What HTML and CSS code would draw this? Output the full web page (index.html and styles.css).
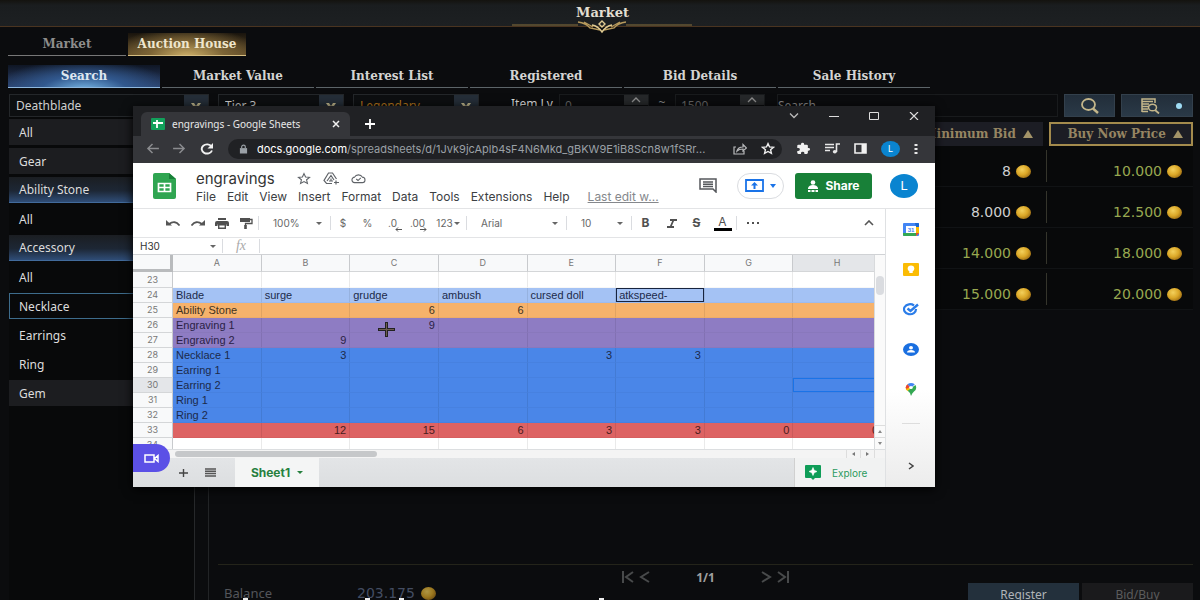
FILE: index.html
```html
<!DOCTYPE html>
<html lang="en">
<head>
<meta charset="utf-8">
<title>Market</title>
<link rel="stylesheet" href="styles.css">
</head>
<body>
<main class="game">
  <header class="game-title">
    <h1>Market</h1>
    <svg class="ornament" viewBox="0 0 180 14" width="180" height="14" fill="none" stroke="#b79a5c">
      <path d="M0 5h66M114 5h66" stroke="#8a713c"/>
      <path d="M66 2q8 1 12 6l10 2M114 2q-8 1-12 6l-10 2M72 2l9 5M108 2l-9 5" stroke-width="1.3"/>
      <path d="M90 1l3 3-3 3-3-3zM80 5q6 1 10 7 4-6 10-7" stroke="#e0cb92" stroke-width="1.4"/>
    </svg>
  </header>

  <nav class="tabs-main">
    <button class="mtab">Market</button>
    <button class="mtab on">Auction House</button>
  </nav>
  <nav class="tabs-sub">
    <button class="stab on">Search</button>
    <button class="stab">Market Value</button>
    <button class="stab">Interest List</button>
    <button class="stab">Registered</button>
    <button class="stab">Bid Details</button>
    <button class="stab">Sale History</button>
  </nav>

  <form class="filters">
    <div class="pick wide"><select aria-label="Class"><option>Deathblade</option></select><span class="drop"><svg viewBox="0 0 12 8" width="12" height="8"><path d="M1 1h3l2 3 2-3h3L7 7H5z" fill="#c3b98e"/></svg></span></div>
    <div class="pick"><select aria-label="Tier"><option>Tier 3</option></select><span class="drop"><svg viewBox="0 0 12 8" width="12" height="8"><path d="M1 1h3l2 3 2-3h3L7 7H5z" fill="#c3b98e"/></svg></span></div>
    <div class="pick gold"><select aria-label="Grade"><option>Legendary</option></select><span class="drop"><svg viewBox="0 0 12 8" width="12" height="8"><path d="M1 1h3l2 3 2-3h3L7 7H5z" fill="#c3b98e"/></svg></span></div>
    <label class="lv" for="lvmin">Item Lv.</label>
    <div class="step"><input id="lvmin" type="text" value="0"><span class="up"><svg viewBox="0 0 10 6" width="10" height="6"><path d="M1 5l4-4 4 4" fill="none" stroke="#8d8d8d" stroke-width="1.3"/></svg></span></div>
    <span class="tilde">~</span>
    <div class="step"><input type="text" aria-label="Maximum item level" value="1500"><span class="up"><svg viewBox="0 0 10 6" width="10" height="6"><path d="M1 5l4-4 4 4" fill="none" stroke="#8d8d8d" stroke-width="1.3"/></svg></span></div>
    <input class="query" type="text" aria-label="Search items" placeholder="Search">
    <button type="button" class="tool" aria-label="Search"><svg viewBox="0 0 20 16" width="20" height="16" fill="none" stroke="#c4b68a"><ellipse cx="8.500" cy="6.500" rx="6.500" ry="5.500" stroke-width="1.800"/><path d="M13 10.500l5 4.500" stroke-width="2.400"/></svg></button>
    <button type="button" class="tool more" aria-label="Detailed search"><svg viewBox="0 0 20 16" width="20" height="16" fill="none" stroke="#c4b68a"><path d="M2 14V1h13v4M2 3.500h11M2 6h7M2 8.500h6M2 11h6M2 13.500h6" stroke-width="1.500"/><ellipse cx="12.500" cy="9.500" rx="4" ry="3.300" stroke-width="1.500"/><path d="M15 12l4 3.500" stroke-width="1.800"/></svg><i></i></button>
  </form>

  <div class="content">
    <aside class="cats">
      <button class="cat solid">All</button>
      <button class="cat solid">Gear</button>
      <button class="cat open">Ability Stone</button>
      <button class="cat">All</button>
      <button class="cat open">Accessory</button>
      <button class="cat">All</button>
      <button class="cat sel">Necklace</button>
      <button class="cat">Earrings</button>
      <button class="cat">Ring</button>
      <button class="cat solid">Gem</button>
    </aside>
    <section class="results">
      <table class="bids">
        <thead><tr><th>Minimum Bid <i></i></th><th class="sorted">Buy Now Price <i></i></th></tr></thead>
        <tbody>
          <tr><td class="w">8<b class="coin"></b></td><td>10.000<b class="coin"></b></td></tr>
          <tr><td class="w">8.000<b class="coin"></b></td><td>12.500<b class="coin"></b></td></tr>
          <tr><td>14.000<b class="coin"></b></td><td>18.000<b class="coin"></b></td></tr>
          <tr><td>15.000<b class="coin"></b></td><td>20.000<b class="coin"></b></td></tr>
        </tbody>
      </table>
      <footer class="foot">
        <div class="pager">
          <button aria-label="Previous pages"><svg viewBox="0 0 28 12" width="28" height="12" fill="none" stroke="#484a4b" stroke-width="2"><path d="M1 0v12M11 1L4 6l7 5M27 1l-8 5 8 5"/></svg></button>
          <span>1/1</span>
          <button aria-label="Next pages"><svg viewBox="0 0 28 12" width="28" height="12" fill="none" stroke="#484a4b" stroke-width="2"><path d="M27 0v12M17 1l7 5-7 5M1 1l8 5-8 5"/></svg></button>
        </div>
        <div class="wallet">
          <span class="bal">Balance</span><span class="amt">203.175</span><b class="coin dim"></b>
          <button class="act reg">Register</button><button class="act">Bid/Buy</button>
        </div>
      </footer>
    </section>
  </div>
  <div class="caption"><i class="m1"></i><i class="m2"></i><i class="m3"></i><i class="m4"></i></div>
</main>

<section class="browser">
  <div class="strip">
    <div class="tab">
      <svg viewBox="0 0 14 12" width="14" height="12"><rect width="14" height="12" rx="1" fill="#12a05b"/><path d="M2 5h10M6 2v8" stroke="#fff" stroke-width="1.800"/></svg>
      <span>engravings - Google Sheets</span>
      <button aria-label="Close tab"><svg viewBox="0 0 8 8" width="8" height="8"><path d="M1 1l6 6M7 1L1 7" stroke="#f1f1f1" stroke-width="1.500"/></svg></button>
    </div>
    <button class="newtab" aria-label="New tab"><svg viewBox="0 0 10 10" width="10" height="10"><path d="M5 0v10M0 5h10" stroke="#fff" stroke-width="1.800"/></svg></button>
    <div class="winbtns">
      <button aria-label="Tab search"><svg viewBox="0 0 10 8" width="10" height="8" fill="none" stroke="#bbb" stroke-width="1.300"><path d="M1 1.500l4 4 4-4"/></svg></button>
      <button aria-label="Minimise"><svg viewBox="0 0 10 8" width="10" height="8" stroke="#ddd"><path d="M0 4.500h10"/></svg></button>
      <button aria-label="Maximise"><svg viewBox="0 0 10 8" width="10" height="8" fill="none" stroke="#ddd"><path d="M.5.500h9v7h-9z"/></svg></button>
      <button aria-label="Close"><svg viewBox="0 0 10 8" width="10" height="8" fill="none" stroke="#ddd" stroke-width="1.200"><path d="M1 0l8 8M9 0L1 8"/></svg></button>
    </div>
  </div>
  <div class="omni">
    <button aria-label="Back"><svg viewBox="0 0 14 12" width="13" height="11" fill="none" stroke="#8b8c8f" stroke-width="1.600"><path d="M14 6H2M7 1L2 6l5 5"/></svg></button>
    <button aria-label="Forward"><svg viewBox="0 0 14 12" width="13" height="11" fill="none" stroke="#8b8c8f" stroke-width="1.600"><path d="M0 6h12M7 1l5 5-5 5"/></svg></button>
    <button aria-label="Reload"><svg viewBox="0 0 14 12" width="14" height="12" fill="none" stroke="#f1f1f1" stroke-width="1.900"><path d="M11.500 3.500A5.300 4.600 0 1 0 12 7.500"/><path d="M13 0v5.500H7.500z" fill="#f1f1f1" stroke="none"/></svg></button>
    <div class="url">
      <svg viewBox="0 0 10 10" width="9" height="10"><rect x="1" y="4" width="8" height="6" fill="#9aa0a6"/><path d="M3 4V2.500a2 1.800 0 0 1 4 0V4" fill="none" stroke="#9aa0a6" stroke-width="1.300"/></svg>
      <span class="addr"><b>docs.google.com</b>/spreadsheets/d/1Jvk9jcAplb4sF4N6Mkd_gBKW9E1iB8Scn8w1fSRr...</span>
      <svg viewBox="0 0 14 12" width="14" height="12" fill="none" stroke="#b8b9bb" stroke-width="1.200"><path d="M3 4H1v7h10V8M4 8q1-4 6-4V1.500L13.500 5 10 8V6Q6 6 4 8z"/></svg>
      <svg viewBox="0 0 24 24" width="14" height="13" preserveAspectRatio="none" fill="none" stroke="#eee" stroke-width="2.400"><path d="M12 3l2.700 6.200 6.800.6-5.100 4.500 1.500 6.700L12 17.500 6.100 21l1.500-6.700-5.100-4.500 6.800-.6z"/></svg>
    </div>
    <button aria-label="Extensions"><svg viewBox="0 0 24 24" width="15" height="13" preserveAspectRatio="none" fill="#f1f1f1"><path d="M20 11h-1V7a2 2 0 0 0-2-2h-4V4a2.500 2.500 0 0 0-5 0v1H4a2 2 0 0 0-2 2v4h1.500a2.700 2.700 0 0 1 0 5.400H2V20a2 2 0 0 0 2 2h4v-1.500a2.700 2.700 0 0 1 5.400 0V22H17a2 2 0 0 0 2-2v-4h1a2.500 2.500 0 0 0 0-5z"/></svg></button>
    <button aria-label="Media"><svg viewBox="0 0 15 11" width="15" height="11" fill="none" stroke="#e8e8e8" stroke-width="1.600"><path d="M0 1.500h9M0 4.500h9M0 7.500h5M11.500 9V1H15"/><ellipse cx="9.800" cy="8.800" rx="2" ry="1.700" fill="#e8e8e8" stroke="none"/></svg></button>
    <button aria-label="Side panel"><svg viewBox="0 0 13 11" width="13" height="11"><path d="M1 1h11v9H1z" fill="none" stroke="#f1f1f1" stroke-width="1.600"/><path d="M7.500 1H12v9H7.500z" fill="#f1f1f1"/></svg></button>
    <button class="me" aria-label="Profile">L</button>
    <button aria-label="Menu"><svg viewBox="0 0 4 12" width="4" height="12" fill="#e8e8e8"><path d="M.5 1h3v2h-3zM.5 5h3v2h-3zM.5 9h3v2h-3z"/></svg></button>
  </div>

  <div class="doc-head">
    <svg class="logo" viewBox="0 0 23 26" width="23" height="26"><path d="M2 0h14l7 6v18a2 2 0 0 1-2 2H2a2 2 0 0 1-2-2V2a2 2 0 0 1 2-2z" fill="#2fa551"/><path d="M16 0l7 6h-7z" fill="#188038"/><path d="M5.500 10.500h12v8h-12zM5.500 14.500h12M11.500 10.500v8" fill="none" stroke="#fff" stroke-width="1.700"/></svg>
    <div class="doc-id">
      <div class="doc-name"><h2>engravings</h2>
        <svg viewBox="0 0 24 24" width="14" height="13" preserveAspectRatio="none" fill="none" stroke="#5f6368" stroke-width="1.900"><path d="M12 3l2.700 6.200 6.800.6-5.100 4.500 1.500 6.700L12 17.500 6.100 21l1.500-6.700-5.100-4.500 6.800-.6z"/></svg>
        <svg viewBox="0 0 16 13" width="16" height="13" fill="none" stroke="#5f6368"><path d="M9 11.500H3.500L1 8.500 5.500 1h4l4 6M4 9l4-5.500L11 8M6 9h4M8 6.500v2M13 8.500v4M11 10.500h5" stroke-width="1.200"/></svg>
        <svg viewBox="0 0 16 12" width="15" height="11" fill="none" stroke="#5f6368" stroke-width="1.200"><path d="M4 10.500a3 3 0 0 1-.3-6 4.600 4 0 0 1 8.500 0A3 3 0 0 1 12 10.500zM5.500 6.500l2 1.700 3-3"/></svg>
      </div>
      <nav class="menus"><button>File</button><button>Edit</button><button>View</button><button>Insert</button><button>Format</button><button>Data</button><button>Tools</button><button>Extensions</button><button>Help</button><a href="#">Last edit w...</a></nav>
    </div>
    <button class="plain" aria-label="Comments"><svg viewBox="0 0 18 15" width="18" height="15" fill="none" stroke="#55585c" stroke-width="1.500"><path d="M1 1h16v13l-3-3H1zM4 4h10M4 6.200h10M4 8.400h10"/></svg></button>
    <button class="present" aria-label="Present"><svg viewBox="0 0 19 13" width="19" height="13"><path d="M1 1h17v11H1z" fill="none" stroke="#1a73e8" stroke-width="1.800"/><path d="M9.500 3L13 6.500h-2.500V10h-2V6.500H6z" fill="#1a73e8"/></svg><svg viewBox="0 0 6 4" width="6" height="4"><path d="M0 0h6L3 4z" fill="#1a73e8"/></svg></button>
    <button class="share"><svg viewBox="0 0 12 12" width="12" height="12" fill="#fff"><ellipse cx="6" cy="2.500" rx="2.300" ry="2.300"/><path d="M1 8q1-3 5-3t5 3v1H1zM1 10h2.500v2H1zM4.500 10h3v2h-3zM8.500 10H11v2H8.500z"/></svg>Share</button>
    <button class="avatar" aria-label="Account">L</button>
  </div>

  <div class="doc-body">
    <div class="sheet">
      <div class="tools">
        <button aria-label="Undo"><svg viewBox="0 0 14 6" width="14" height="6" fill="none" stroke="#555" stroke-width="1.700"><path d="M3 4q6-4.500 10.500 1.500"/><path d="M0 0v5.500h6z" fill="#555" stroke="none"/></svg></button>
        <button aria-label="Redo"><svg viewBox="0 0 14 6" width="14" height="6" fill="none" stroke="#555" stroke-width="1.700"><path d="M11 4Q5-.500.500 5.500"/><path d="M14 0v5.500H8z" fill="#555" stroke="none"/></svg></button>
        <button aria-label="Print"><svg viewBox="0 0 14 11" width="14" height="11" fill="#505050"><path d="M3 0h8v2H3zM2 3h10a2 2 0 0 1 2 2v3h-2.500V6.500h-9V8H0V5a2 2 0 0 1 2-2z"/><path d="M3.700 6.700h6.600v3.600H3.700z" fill="none" stroke="#505050" stroke-width="1.400"/></svg></button>
        <button aria-label="Paint format"><svg viewBox="0 0 13 11" width="13" height="11" fill="#505050"><path d="M0 0h10v4H0z"/><path d="M10 1.500h2v4H5.500V8" fill="none" stroke="#505050" stroke-width="1.300"/><path d="M4.200 7h2.600v4H4.200z"/></svg></button>
        <button class="dd bar">100%<i></i></button>
        <button class="bar">$</button>
        <button>%</button>
        <button class="dec" aria-label="Decrease decimals">.0<svg viewBox="0 0 7 5" width="7" height="5"><path d="M7 2.500H1M3 .5l-2 2 2 2" fill="none" stroke="#555"/></svg></button>
        <button class="dec" aria-label="Increase decimals">.00<svg viewBox="0 0 7 5" width="7" height="5"><path d="M0 2.500h6M4 .5l2 2-2 2" fill="none" stroke="#555"/></svg></button>
        <button class="num">123<i></i></button>
        <button class="dd bar">Arial<i></i></button>
        <button class="dd bar">10<i></i></button>
        <button class="bar fmt">B</button>
        <button class="fmt it" aria-label="Italic"><svg viewBox="0 0 10 9" width="10" height="9" fill="none" stroke="#505050" stroke-width="1.800"><path d="M3 1h7M0 8h7M6.500 1l-3 7"/></svg></button>
        <button class="fmt st">S</button>
        <button class="fmt ink"><span>A</span></button>
        <button class="bar dots" aria-label="More"><svg viewBox="0 0 12 2" width="12" height="2" fill="#505050"><path d="M0 0h2v2H0zM5 0h2v2H5zM10 0h2v2h-2z"/></svg></button>
        <button class="hide" aria-label="Hide menus"><svg viewBox="0 0 10 6" width="10" height="6"><path d="M1 5l4-4 4 4" fill="none" stroke="#555" stroke-width="1.600"/></svg></button>
      </div>
      <div class="formula"><button class="cellref">H30<i></i></button><label for="fx">fx</label><input id="fx" type="text"></div>
      <div class="grid-wrap">
        <div class="grid">
          <table class="cells">
            <colgroup><col class="rowno"><col span="8"></colgroup>
            <thead><tr><th class="corner"></th><th>A</th><th>B</th><th>C</th><th>D</th><th>E</th><th>F</th><th>G</th><th class="cur">H</th></tr></thead>
            <tbody>
              <tr class="first"><th>23</th><td></td><td></td><td></td><td></td><td></td><td></td><td></td><td></td></tr>
              <tr class="sky"><th>24</th><td>Blade</td><td>surge</td><td>grudge</td><td>ambush</td><td>cursed doll</td><td class="boxed">atkspeed-</td><td></td><td></td></tr>
              <tr class="amber"><th>25</th><td>Ability Stone</td><td></td><td class="n">6</td><td class="n">6</td><td></td><td></td><td></td><td></td></tr>
              <tr class="violet"><th>26</th><td>Engraving 1</td><td></td><td class="n">9</td><td></td><td></td><td></td><td></td><td></td></tr>
              <tr class="violet"><th>27</th><td>Engraving 2</td><td class="n">9</td><td></td><td></td><td></td><td></td><td></td><td></td></tr>
              <tr class="blue"><th>28</th><td>Necklace 1</td><td class="n">3</td><td></td><td></td><td class="n">3</td><td class="n">3</td><td></td><td></td></tr>
              <tr class="blue"><th>29</th><td>Earring 1</td><td></td><td></td><td></td><td></td><td></td><td></td><td></td></tr>
              <tr class="blue"><th class="cur">30</th><td>Earring 2</td><td></td><td></td><td></td><td></td><td></td><td></td><td class="active"></td></tr>
              <tr class="blue"><th>31</th><td>Ring 1</td><td></td><td></td><td></td><td></td><td></td><td></td><td></td></tr>
              <tr class="blue"><th>32</th><td>Ring 2</td><td></td><td></td><td></td><td></td><td></td><td></td><td></td></tr>
              <tr class="red"><th>33</th><td></td><td class="n">12</td><td class="n">15</td><td class="n">6</td><td class="n">3</td><td class="n">3</td><td class="n">0</td><td class="n">0</td></tr>
              <tr><th>34</th><td></td><td></td><td></td><td></td><td></td><td></td><td></td><td></td></tr>
            </tbody>
          </table>
          <svg class="cursor" viewBox="0 0 17 15" width="17" height="15"><path d="M8.500 0v15M0 7.500h17" stroke="#222" stroke-width="3"/><path d="M8.500 1v13M1 7.500h15" stroke="#6d5b50" stroke-width="1"/></svg>
        </div>
        <div class="vscroll"><span class="thumb"></span><span class="arr"><svg viewBox="0 0 4 3" width="4" height="3"><path d="M0 3h4L2 0z" fill="#888"/></svg></span><span class="arr"><svg viewBox="0 0 4 3" width="4" height="3"><path d="M0 0h4L2 3z" fill="#888"/></svg></span></div>
      </div>
      <div class="hscroll"><span class="thumb"></span><span class="arr first"><svg viewBox="0 0 3 4" width="3" height="4"><path d="M3 0v4L0 2z" fill="#777"/></svg></span><span class="arr"><svg viewBox="0 0 3 4" width="3" height="4"><path d="M0 0v4l3-2z" fill="#777"/></svg></span><span class="arr end"></span></div>
      <div class="sheets">
        <button aria-label="Add sheet"><svg viewBox="0 0 9 8" width="9" height="8"><path d="M4.500 0v8M0 4h9" stroke="#444" stroke-width="1.400"/></svg></button>
        <button aria-label="All sheets"><svg viewBox="0 0 11 9" width="11" height="9"><path d="M0 1h11M0 3.300h11M0 5.600h11M0 8h11" stroke="#555" stroke-width="1.500"/></svg></button>
        <button class="sheet1">Sheet1<i></i></button>
        <button class="explore"><svg viewBox="0 0 16 15" width="16" height="15"><path d="M1 0h14a1 1 0 0 1 1 1v11a1 1 0 0 1-1 1h-5l-2 2-2-2H1a1 1 0 0 1-1-1V1a1 1 0 0 1 1-1z" fill="#0f9d58"/><path d="M8 2.500l1.200 2.800 2.800 1.200-2.800 1.200L8 10.500 6.800 7.700 4 6.500l2.800-1.200z" fill="#fff" stroke="#fff" stroke-width=".6"/></svg>Explore</button>
      </div>
      <button class="meet" aria-label="Meet"><svg viewBox="0 0 15 9" width="15" height="9" fill="none" stroke="#fff" stroke-width="1.500"><path d="M1 1h9v7H1zM10.500 4.500L14 1.500v6z"/></svg></button>
    </div>
    <aside class="rail">
      <button aria-label="Calendar"><svg viewBox="0 0 16 13" width="16" height="13"><rect width="16" height="13" rx="1" fill="#4285f4"/><path d="M13 3h3v7l-3 3z" fill="#fbbc04"/><path d="M0 10h13v3H1a1 1 0 0 1-1-1z" fill="#34a853"/><path d="M13 10h3l-3 3z" fill="#ea4335"/><path d="M12 0h3a1 1 0 0 1 1 1v3h-3z" fill="#1967d2"/><path d="M3 3h10v7H3z" fill="#fff"/><text x="8" y="9" text-anchor="middle" class="cal">31</text></svg></button>
      <button aria-label="Keep"><svg viewBox="0 0 16 13" width="16" height="13"><rect width="16" height="13" rx="1" fill="#fbbc04"/><ellipse cx="8" cy="5.500" rx="3.300" ry="2.900" fill="#fff"/><path d="M6.300 8h3.400v2H6.300z" fill="#fff"/></svg></button>
      <button aria-label="Tasks"><svg viewBox="0 0 16 13" width="16" height="13" fill="none" stroke="#2b7de9"><path d="M11 2.500A6 5 0 1 0 13 6" stroke-width="2.200"/><path d="M4.500 5.500L7.500 8 15 1.500" stroke-width="2.400"/></svg></button>
      <button aria-label="Contacts"><svg viewBox="0 0 16 13" width="16" height="13"><ellipse cx="8" cy="6.500" rx="8" ry="6.500" fill="#1a6fe0"/><ellipse cx="8" cy="4.700" rx="2" ry="1.700" fill="#fff"/><path d="M4 9.500q0-2.500 4-2.500t4 2.500z" fill="#fff"/></svg></button>
      <button aria-label="Maps"><svg viewBox="0 0 12 13" width="12" height="13"><path d="M6 13Q5.500 9.500 2.500 7.500L10.500 2q2 4-1.500 6.500Q7 10 6 13z" fill="#34a853"/><path d="M1 6.500Q0 3.500 2.500 1.500L6 5 2.500 8z" fill="#fbbc04"/><path d="M.7 4.500Q1 2.500 2.500 1.300L5 4 1.500 6z" fill="#ea4335"/><path d="M2.500 1.300Q6-1.300 9.800 1.300L6 5z" fill="#4285f4"/><ellipse cx="6" cy="4.500" rx="1.800" ry="1.500" fill="#fff"/></svg></button>
      <hr>
      <button class="collapse" aria-label="Hide side panel"><svg viewBox="0 0 6 8" width="6" height="8"><path d="M1 1l4 3-4 3" fill="none" stroke="#444" stroke-width="1.500"/></svg></button>
    </aside>
  </div>
</section>
</body>
</html>
```
FILE: styles.css
```css
* { box-sizing: border-box; }
body { margin: 0; background: #0b0c0e; color: #ddd; font-family: "Noto Sans", "Open Sans", sans-serif; font-size: 12px; }
button, input, select { font: inherit; color: inherit; background: none; border: 0; margin: 0; padding: 0; border-radius: 0; }
button svg, span svg { display: block; }
h1, h2 { margin: 0; }

/* Game market screen */
.game { height: 100vh; overflow: hidden; display: flex; flex-direction: column; position: relative; }
.game-title { height: 27px; flex: none; background: linear-gradient(#14130f, #1a1d1f 20%, #1d2022); border-bottom: 1px solid #4a3420; text-align: center; position: relative; padding-left: 5px; }
.game-title h1 { font: bold 13px/26px "DejaVu Serif", serif; color: #e3dfd2; }
.ornament { position: absolute; left: calc(50% - 88px); top: 20px; }
.tabs-main { display: flex; gap: 2px; padding: 6px 8px 0; height: 29px; flex: none; }
.mtab { width: 118px; border-bottom: 1px solid #777; font: bold 12px/22px "DejaVu Serif", serif; color: #8d8d8b; }
.mtab.on { color: #efe6cc; border-color: #d6bd80; background: radial-gradient(ellipse at 50% 110%, #d2b46c, #7d6536 45%, transparent 90%), linear-gradient(#19140d, #5c4827); }
.tabs-sub { display: flex; gap: 2px; padding: 9px 8px 0; height: 32px; flex: none; }
.stab { width: 152px; border-bottom: 1px solid #5c6468; font: bold 12px/20px "DejaVu Serif", serif; color: #d4d4d2; }
.stab.on { border-color: #8fb8de; color: #dfe7f0; background: radial-gradient(ellipse at 50% 115%, #79b9e8, #31588e 40%, transparent 85%), linear-gradient(#0f1624, #2a3f68); }

.filters { display: flex; align-items: stretch; height: 23px; margin: 6px 7px 0 9px; flex: none; }
.pick { width: 126px; margin-right: 9px; border: 1px solid #24272a; background: #0d0f11; display: flex; }
.pick.wide { width: 200px; }
.pick select { flex: 1; appearance: none; padding-left: 6px; color: #cfcfcf; }
.pick.gold select { color: #b8771c; }
.drop { width: 24px; background: #252e38; display: grid; place-items: center; }
.lv { margin-left: 23px; width: 48px; line-height: 20px; white-space: nowrap; }
.step { width: 90px; border: 1px solid #191b1d; display: flex; }
.step input { flex: 1; min-width: 0; padding-left: 5px; color: #666; }
.up { width: 24px; height: 10px; background: #26282a; display: grid; place-items: center; }
.tilde { width: 26px; text-align: center; color: #888; }
.query { flex: 1; min-width: 0; margin: 0 6px 0 12px; border: 1px solid #191b1d; color: #888; }
.query::placeholder { color: #888; }
.tool { width: 51px; background: linear-gradient(#222e3a, #2a3947); border: 1px solid #33404c; display: flex; align-items: center; justify-content: center; margin-right: 6px; }
.tool.more { width: 72px; margin: 0; gap: 16px; padding-left: 8px; }
.tool i { width: 6px; height: 6px; border-radius: 3px; background: #9fdcf4; }

.content { flex: 1; min-height: 0; display: flex; }
.cats { width: 186px; margin-left: 9px; flex: none; padding-top: 2px; border-right: 1px solid #26282a; background: #08090a; display: grid; grid-template-rows: repeat(10, 26px); row-gap: 3px; align-content: start; }
.cat { text-align: left; padding-left: 10px; color: #dcdcdc; }
.cat.solid { background: #1c1d20; }
.cat.open { background: linear-gradient(#1b1e22, #1d2735 55%, #2f4d77); border-bottom: 1px solid #426b9c; }
.cat.sel { border: 1px solid #3d6c8c; padding-left: 9px; }
.results { flex: 1; margin-left: 13px; padding: 5px 7px 0 9px; border-left: 1px solid #222426; display: flex; flex-direction: column; min-width: 0; }
.bids { align-self: flex-end; border-collapse: separate; border-spacing: 0; table-layout: fixed; width: 300px; background: #08090a; }
.bids th { font: bold 12px/20px "DejaVu Serif", serif; color: #968562; text-align: right; height: 24px; padding: 0 10px 0 0; background: #1c1d24; white-space: nowrap; border-right: 6px solid #0b0c0e; }
.bids th.sorted { border: 2px solid #a48b4d; padding-right: 8px; }
.bids th:first-child { width: 156px; }
.bids th i { display: inline-block; border: 5px solid transparent; border-top: 0; border-bottom: 8px solid #a39368; margin-left: 3px; }
.bids td { font: 14px/16px "DejaVu Sans", sans-serif; color: #98a850; text-align: right; height: 41px; padding: 9px 11px 0 0; border-bottom: 1px solid #111315; }
.bids td:first-child { background: linear-gradient(#35352c, #35352c) right 2px center / 1px 32px no-repeat; padding-right: 18px; }
.bids td.w { color: #cfcfcf; }
.coin { display: inline-block; width: 15px; height: 13px; border-radius: 50%; margin-left: 5px; vertical-align: -2px; background: radial-gradient(ellipse at 40% 35%, #f3d05c, #dba727 45%, #9a6a14 80%); }
.foot { margin-top: auto; flex: none; height: 36px; border-top: 1px solid #24241a; }
.pager { height: 18px; padding-top: 6px; display: flex; justify-content: center; align-items: center; gap: 46px; font-size: 12px; font-weight: bold; color: #a0a0a0; }
.wallet { display: flex; height: 24px; padding-left: 6px; color: #53555a; font-size: 13px; line-height: 20px; }
.bal { width: 133px; }
.amt { font: 14px/20px "DejaVu Sans", sans-serif; color: #434d62; }
.coin.dim { margin: 4px auto 0 6px; opacity: .7; }
.act { width: 111px; height: 24px; line-height: 22px; margin-left: 3px; background: #1a1a1c; color: #5c5c5c; font-size: 12px; }
.act.reg { background: #23303c; color: #b0b4b8; }
.caption { position: absolute; left: 0; right: 0; bottom: 0; height: 2px; }
.caption i { position: absolute; width: 5px; height: 2px; background: #eee; }
.m1 { left: 243px; } .m2 { left: 365px; } .m3 { left: 399px; } .m4 { left: 599px; }

/* Browser window floating over the game */
.browser { position: absolute; left: 133px; right: 265px; top: 106px; height: 381px; display: flex; flex-direction: column; background: #fff; color: #444; box-shadow: 0 2px 10px #000; overflow: hidden; }
.strip { height: 30px; flex: none; background: #202124; display: flex; padding-left: 8px; }
.tab { width: 209px; margin-top: 6px; background: #35363a; border-radius: 6px 6px 0 0; display: flex; align-items: center; padding: 0 10px; color: #e8e8e8; font-size: 10px; }
.tab span { flex: 1; padding-left: 7px; white-space: nowrap; }
.newtab { margin-left: 15px; padding-top: 6px; }
.winbtns { margin-left: auto; display: flex; align-items: center; padding: 0 16px 10px 0; gap: 30px; }
.omni { height: 27px; flex: none; background: #35363a; display: flex; align-items: center; padding: 0 17px 2px 13px; gap: 14px; }
.url { flex: 1; min-width: 0; height: 20px; background: #202124; border-radius: 10px; display: flex; align-items: center; padding: 0 7px 0 11px; gap: 14px; color: #9aa0a6; font: 11px/20px Inter, sans-serif; }
.addr { flex: 1; margin-left: -5px; white-space: nowrap; overflow: hidden; }
.addr b { font-weight: normal; color: #fff; }
.me { width: 19px; height: 16px; border-radius: 50%; background: #0a84d0; color: #fff; font: 9px/16px Roboto, sans-serif; }
.doc-head { height: 46px; flex: none; display: flex; align-items: center; border-bottom: 1px solid #e3e4e6; padding: 0 17px 0 20px; }
.logo { flex: none; }
.doc-id { flex: 1; min-width: 0; padding-left: 20px; }
.doc-name { display: flex; align-items: center; gap: 12px; height: 20px; margin-top: 2px; }
.doc-name h2 { font: 15px/20px Inter, sans-serif; color: #333; width: 85px; margin-right: 4px; }
.menus { display: flex; gap: 11px; font: 12px/16px Inter, sans-serif; color: #3c4043; white-space: nowrap; }
.menus a { color: #85888c; margin-left: 7px; }
.plain { margin-right: 20px; }
.present { width: 47px; height: 26px; border: 1px solid #dadce0; border-radius: 13px; display: flex; align-items: center; justify-content: center; gap: 6px; margin-right: 11px; }
.share { width: 77px; height: 26px; background: #188038; border-radius: 3px; color: #fff; font: bold 12px/26px Inter, sans-serif; display: flex; align-items: center; justify-content: center; gap: 6px; }
.avatar { width: 28px; height: 24px; border-radius: 50%; background: #0a84d0; color: #fff; font: 13px/24px Roboto, sans-serif; margin-left: 18px; }

.doc-body { flex: 1; min-height: 0; display: flex; }
.sheet { flex: 1; min-width: 0; display: flex; flex-direction: column; position: relative; }
.tools { height: 29px; flex: none; border-bottom: 1px solid #e3e4e6; display: grid; grid-template-columns: 25px 25px 24px 24px 72px 25px 25px 25px 25px 36px 100px 65px 28px 25px 25px 27px 32px 1fr; padding-left: 27px; align-items: center; font: 10px/14px Inter, sans-serif; color: #666; }
.tools button { display: flex; align-items: center; justify-content: center; height: 14px; }
.tools i, .cellref i, .sheet1 i { border: 3px solid transparent; border-top: 3px solid #666; border-bottom: 0; }
.tools .bar { border-left: 1px solid #dadce0; }
.tools .dd { justify-content: space-between; padding: 0 8px 0 14px; }
.tools .dec { align-items: center; gap: 0; position: relative; }
.dec svg { position: absolute; right: 3px; bottom: -2px; }
.tools .num { gap: 1px; }
.tools .fmt { font-size: 12px; font-weight: bold; color: #505050; }
.fmt.st { text-decoration: line-through; }
.ink span { border-bottom: 3px solid #000; width: 18px; line-height: 13px; font-weight: normal; }
.tools .hide { justify-content: flex-end; padding-right: 11px; }
.formula { height: 17px; flex: none; display: flex; align-items: center; border-bottom: 1px solid #d0d2d5; font: 10px/14px Inter, sans-serif; color: #333; }
.cellref { width: 90px; display: flex; align-items: center; justify-content: space-between; padding: 0 6px 0 7px; border-right: 1px solid #dadce0; }
.formula label { width: 37px; text-align: center; font: italic 14px/14px "Liberation Serif", serif; color: #aaa; border-right: 1px solid #dadce0; }
.formula input { flex: 1; min-width: 0; height: 14px; }
.grid-wrap { flex: 1; min-height: 0; display: flex; }
.grid { flex: 1; min-width: 0; overflow: hidden; position: relative; }
.cells { border-collapse: separate; border-spacing: 0; table-layout: fixed; width: calc(100% + 8px); font: 11px/14px "Liberation Sans", Arial, sans-serif; color: #1c2a4a; }
.rowno { width: 40px; }
.cells th { font: 9px/14px Inter, sans-serif; color: #777; background: #f8f9fa; border-right: 1px solid #c8cacd; border-bottom: 1px solid #d4d6d8; padding: 0; }
.cells thead th { height: 17px; }
.cells th.corner { border-right: 3px solid #b9bbbd; border-bottom: 3px solid #b9bbbd; }
.cells th.cur { background: #e4e6e9; }
.cells td { height: 15px; padding: 0 3px; border-right: 1px solid rgba(0,0,0,.08); border-bottom: 1px solid rgba(0,0,0,.03); white-space: nowrap; }
.cells .first td { height: 16px; }
.n { text-align: right; }
.sky td { background: #a4c2f4; } .amber td { background: #f6b26b; color: #43341f; } .violet td { background: #8e7cc3; color: #2b1f45; }
.blue td { background: #4a86e8; } .red td { background: #dd6363; color: #4a1c1c; }
.cells td.boxed { box-shadow: inset 0 0 0 1px #17243f; }
.cells td.active { box-shadow: inset 0 0 0 1px #1a73e8; }
.cursor { position: absolute; left: 245px; top: 67px; }
.vscroll { width: 11px; flex: none; display: flex; flex-direction: column; background: #fafafa; border-left: 1px solid #d8dadc; padding-top: 21px; }
.vscroll .thumb { height: 19px; width: 8px; margin: 0 1px auto; border-radius: 4px; background: #dadce0; }
.vscroll .arr { height: 12px; display: grid; place-items: center; border-top: 1px solid #ddd; }
.hscroll { height: 9px; flex: none; display: flex; background: #f4f4f4; border-top: 1px solid #dcdee0; padding-left: 42px; }
.hscroll .thumb { width: 202px; height: 6px; margin: 1px auto 0 0; border-radius: 3px; background: #c6c8ca; }
.hscroll .arr { width: 14px; display: grid; place-items: center; border-left: 1px solid #ddd; }
.hscroll .end { width: 11px; }
.sheets { height: 29px; flex: none; display: flex; background: linear-gradient(#e3e5e7, #dcdee0); padding-left: 42px; }
.sheets > button { width: 16px; display: grid; place-items: center; margin-right: 11px; }
.sheets .sheet1 { width: 84px; margin-left: 6px; background: #f4f5f5; display: flex; align-items: center; justify-content: center; gap: 7px; font: bold 12px/14px Inter, sans-serif; color: #26803f; }
.sheet1 i { border-top-color: #26803f; }
.sheets .explore { margin: 0 0 0 auto; width: 91px; background: #f1f2f2; border-left: 1px solid #d0d0d0; display: flex; align-items: center; padding-left: 10px; gap: 11px; font: 10px/14px Inter, sans-serif; color: #2a9a5e; }
.meet { position: absolute; left: 0; bottom: 15px; width: 37px; height: 28px; border-radius: 0 14px 14px 0; background: #5b50e6; display: grid; place-items: center; }
.rail { width: 50px; flex: none; border-left: 1px solid #dfe1e3; background: linear-gradient(#fff 65%, #ececec); display: flex; flex-direction: column; align-items: center; padding-top: 14px; gap: 27px; }
.rail button { height: 13px; }
.rail hr { width: 18px; margin: 0; border: 0; border-top: 1px solid #ddd; }
.rail .collapse { margin-top: 11px; height: 8px; }
.cal { font: bold 6px "Liberation Sans", sans-serif; fill: #4285f4; }
```
